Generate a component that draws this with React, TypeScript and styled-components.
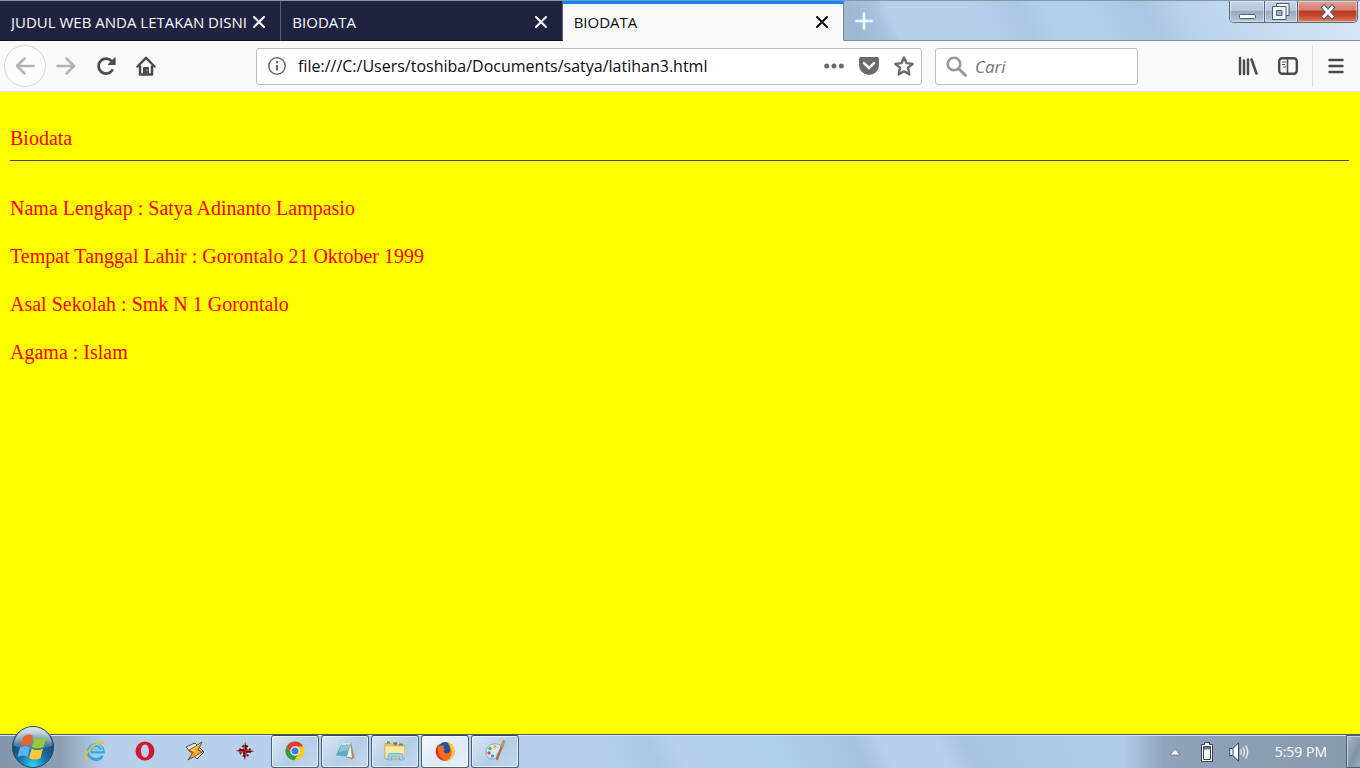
import React from 'react';
import styled, { createGlobalStyle, css } from 'styled-components';

const GlobalStyle = createGlobalStyle`
  * {
    box-sizing: border-box;
  }

  body {
    margin: 0;
    font-family: 'Open Sans', 'Noto Sans', sans-serif;
  }

  button,
  input {
    font-family: inherit;
  }

  svg {
    display: block;
    flex: none;
  }
`;

const Desktop = styled.div`
  display: flex;
  flex-direction: column;
  min-height: 100vh;
`;

const TitleBar = styled.header`
  display: flex;
  align-items: stretch;
  height: 41px;
  border-top: 1px solid #7f97a8;
  background: linear-gradient(
    65deg,
    #b7d1eb 71%,
    #adc8e2 75%,
    #b3cee9 77%,
    #b3cee9 80%,
    #abc6e0 84%,
    #b9d3ec 87%,
    #d3e4f4 98%
  );
`;

const TabList = styled.div`
  display: flex;
  flex: 0 1 844px;
  min-width: 0;
`;

const Tab = styled.div<{ $active?: boolean }>`
  display: flex;
  align-items: center;
  flex: 1 1 0;
  min-width: 0;
  padding: 2px 11px 0 11px;
  background: #202340;
  color: #f9f9fa;
  border-right: 1px solid #5b5d73;
  border-bottom: 1px solid #11132a;

  ${({ $active }) =>
    $active &&
    css`
      padding-top: 0;
      background: #f9f9f9;
      color: #0c0c0d;
      border-top: 3px solid #0a84ff;
      border-right-color: #7088a3;
      border-bottom-color: #f9f9f9;
    `}
`;

const TabTitle = styled.span`
  flex: 1;
  overflow: hidden;
  white-space: nowrap;
  font-size: 15px;
  line-height: 20px;
`;

const PlainButton = styled.button`
  display: flex;
  align-items: center;
  justify-content: center;
  padding: 0;
  border: 0;
  background: none;
  color: inherit;
`;

const CloseTab = styled(PlainButton)`
  flex: none;
  width: 20px;
  height: 20px;
`;

const StripFill = styled.div`
  display: flex;
  flex: 1;
  justify-content: space-between;
  padding-right: 2px;
  border-bottom: 1px solid #7890ab;
`;

const NewTab = styled(PlainButton)`
  width: 60px;
  padding-right: 20px;
  color: #f5f9fd;
  background: linear-gradient(65deg, #9db8d3 20%, #a7c2dd 55%, transparent 75%);
`;

const WindowControls = styled.div`
  display: flex;
  height: 22px;
  border: 1px solid #56687c;
  border-top: 0;
  border-radius: 0 0 5px 5px;
  overflow: hidden;
`;

const WindowButton = styled(PlainButton)<{ $width: number; $close?: boolean }>`
  width: ${({ $width }) => $width}px;
  border-right: 1px solid #56687c;
  box-shadow: inset 0 0 0 1px rgba(255, 255, 255, 0.45);
  background: linear-gradient(#c6d5e4 0%, #b7c8d9 45%, #98aabe 50%, #b5c9dd 100%);

  ${({ $close }) =>
    $close &&
    css`
      border-right: 0;
      background: linear-gradient(#e3a092 0%, #d6806c 42%, #bf3720 50%, #c1472c 70%, #dc8260 100%);
    `}
`;

const Toolbar = styled.nav`
  display: flex;
  align-items: center;
  height: 51px;
  padding: 0 4px;
  background: #f9f9f9;
  border-bottom: 1px solid #dedee4;
`;

const ToolButton = styled(PlainButton)<{ $disabled?: boolean }>`
  flex: none;
  width: 40px;
  height: 40px;
  color: ${({ $disabled }) => ($disabled ? '#b3b3b3' : '#4a4a4b')};
`;

const BackButton = styled(ToolButton)`
  width: 42px;
  height: 42px;
  border: 1px solid #d4d4d4;
  border-radius: 50%;
  background: #fcfcfc;
`;

const Spacer = styled.div`
  flex: 0 1 90px;
`;

const Field = styled.div`
  display: flex;
  align-items: center;
  height: 37px;
  background: #fff;
  border: 1px solid #bdbdbd;
  border-radius: 3px;
  color: #6a6a6b;
`;

const AddressField = styled(Field)`
  flex: 1;
  min-width: 0;
  padding: 0 0 0 10px;
  margin-right: 13px;
`;

const SearchField = styled(Field)`
  flex: 0 1 203px;
  min-width: 0;
  padding: 0 10px;
`;

const TextInput = styled.input`
  flex: 1;
  min-width: 0;
  height: 26px;
  padding: 0;
  margin-left: 11px;
  border: 0;
  outline: 0;
  background: transparent;
  color: #0c0c0d;
  font-size: 16px;
`;

const SearchInput = styled(TextInput)`
  margin-left: 8px;
  font-size: 17px;

  &::placeholder {
    color: #737373;
    font-style: italic;
    opacity: 1;
  }
`;

const FieldButton = styled(PlainButton)`
  flex: none;
  width: 35px;
  height: 35px;
`;

const Divider = styled.span`
  width: 1px;
  height: 42px;
  margin: 0 3px 0 4px;
  background: #dcdcdc;
`;

const Page = styled.main`
  flex: 1;
  padding: 34px 11px 34px 10px;
  background: #ffff00;
  color: #ff0000;
  font-family: 'Liberation Serif', 'Times New Roman', serif;
  font-size: 20px;
  line-height: 24px;
`;

const Rule = styled.hr`
  height: 1px;
  margin: 10px 0 35px;
  border: 0;
  background: #42424a;
`;

const Entry = styled.p`
  margin: 0 0 24px;
`;

const Taskbar = styled.footer`
  display: flex;
  align-items: stretch;
  height: 34px;
  border-top: 1px solid #46576b;
  box-shadow: inset 0 1px 0 #dbe7f2;
  background: linear-gradient(
      90deg,
      #8496ab 0,
      #8c9fb5 60px,
      rgba(183, 209, 236, 0) 105px,
      rgba(183, 209, 236, 0) calc(100% - 235px),
      #8ea3bb calc(100% - 195px),
      #8799ae 100%
    ),
    linear-gradient(
      65deg,
      #b7d1ec 43%,
      #abc8e3 48%,
      #b7d1ec 50%,
      #b0cfeb 57%,
      #a7c2de 63%,
      #b7d1ec 65%,
      #b7d1ec 69%,
      #a8c3df 71%,
      #b0cbe7 79%
    );
`;

const StartSlot = styled.div`
  position: relative;
  width: 70px;
`;

const StartButton = styled(PlainButton)`
  position: absolute;
  left: 11px;
  bottom: 0;
`;

const QuickLaunch = styled(PlainButton)`
  width: 50px;
  padding-bottom: 2px;
`;

const RunningApps = styled.div`
  display: flex;
  gap: 2px;
  padding-left: 1px;
`;

const AppButton = styled(PlainButton)<{ $focused?: boolean }>`
  width: 48px;
  padding-bottom: 2px;
  border: 1px solid #4c6078;
  border-top-color: #35475c;
  border-radius: 3px;
  box-shadow: inset 0 0 0 1px rgba(255, 255, 255, 0.6);
  background: ${({ $focused }) =>
    $focused
      ? 'linear-gradient(150deg, #f4f8fc, #dce9f6 60%, #e8f1f9)'
      : 'linear-gradient(135deg, #d9e6f3, #b3cde9 55%, #c3d8ee)'};
`;

const Tray = styled.div`
  display: flex;
  align-items: center;
  margin-left: auto;
  color: #fff;
`;

const TrayButton = styled(PlainButton)`
  width: 32px;
  height: 32px;
`;

const Clock = styled.time`
  padding: 0 19px 0 20px;
  font-size: 14px;
  line-height: 20px;
`;

const ShowDesktop = styled(PlainButton)`
  align-self: stretch;
  width: 14px;
  border: 1px solid #4d6074;
  border-right: 0;
  box-shadow: inset 1px 1px 0 #c3d0dd;
  background: linear-gradient(120deg, #a9b8c8, #8194aa 60%, #98a9bb);
`;

const CrossIcon = () => (
  <svg width="14" height="14" viewBox="0 0 14 14" fill="none" stroke="currentColor" strokeWidth="2" strokeLinecap="round">
    <path d="M2 2l10 10M12 2L2 12" />
  </svg>
);

const PlusIcon = () => (
  <svg width="18" height="18" viewBox="0 0 18 18" stroke="currentColor" strokeWidth="2.600" strokeLinecap="round">
    <path d="M9 1.5v15M1.5 9h15" />
  </svg>
);

const ArrowIcon = ({ forward }: { forward?: boolean }) => (
  <svg width="20" height="20" viewBox="0 0 20 20" fill="none" stroke="currentColor" strokeWidth="2.5" strokeLinecap="round" strokeLinejoin="round">
    {forward ? <path d="M1.5 10h16.500M10.500 2.500L18 10l-7.500 7.500" /> : <path d="M18.500 10H2M9.500 2.500L2 10l7.500 7.500" />}
  </svg>
);

const ReloadIcon = () => (
  <svg width="20" height="20" viewBox="0 0 20 20" fill="none" stroke="currentColor" strokeWidth="2.700" strokeLinecap="round">
    <path d="M16.300 14.300A7.500 7.500 0 1 1 16 5.500" />
    <path d="M19 2v6.500h-6.500z" fill="currentColor" strokeWidth="1.200" strokeLinejoin="round" />
  </svg>
);

const HomeIcon = () => (
  <svg width="20" height="20" viewBox="0 0 20 20" fill="none" stroke="currentColor" strokeLinecap="round" strokeLinejoin="round">
    <path d="M1.500 10.500L10 1.800l8.500 8.700" strokeWidth="2.500" />
    <path d="M4 10.500v8h12v-8" strokeWidth="2.500" />
    <path d="M7.500 17.500v-6h5v6z" fill="currentColor" strokeWidth="1" />
    <path d="M10.800 14h.4" stroke="#f9f9f9" strokeWidth="1.200" />
  </svg>
);

const InfoIcon = () => (
  <svg width="20" height="20" viewBox="0 0 20 20" fill="none" stroke="currentColor">
    <circle cx="10" cy="10" r="8.200" strokeWidth="1.500" />
    <path d="M10 9v5.500M10 5v2.200" strokeWidth="2.200" />
  </svg>
);

const DotsIcon = () => (
  <svg width="20" height="6" viewBox="0 0 20 6" fill="currentColor">
    <circle cx="2.700" cy="3" r="2.500" />
    <circle cx="10" cy="3" r="2.500" />
    <circle cx="17.300" cy="3" r="2.500" />
  </svg>
);

const PocketIcon = () => (
  <svg width="20" height="18" viewBox="0 0 20 18">
    <path d="M2 0h16q2 0 2 2v6a10 10 0 0 1-20 0V2q0-2 2-2z" fill="currentColor" />
    <path d="M5 6.200l5 4.800 5-4.800" fill="none" stroke="#fff" strokeWidth="2.500" strokeLinecap="round" strokeLinejoin="round" />
  </svg>
);

const StarIcon = () => (
  <svg width="20" height="20" viewBox="0 0 20 20" fill="none" stroke="currentColor" strokeWidth="2.300" strokeLinejoin="round">
    <path d="M10 1.500l2.500 5.700 6.200.6-4.700 4.100 1.400 6.600L10 15.200l-5.400 3.300L6 11.900 1.300 7.800l6.200-.6z" />
  </svg>
);

const SearchIcon = () => (
  <svg width="21" height="21" viewBox="0 0 21 21" fill="none" stroke="#969697" strokeLinecap="round">
    <circle cx="8" cy="8" r="6.300" strokeWidth="2.600" />
    <path d="M13 13l6.300 6.300" strokeWidth="3" />
  </svg>
);

const LibraryIcon = () => (
  <svg width="20" height="20" viewBox="0 0 20 20" fill="none" stroke="currentColor" strokeWidth="2.500" strokeLinecap="round">
    <path d="M2 2v16M6 4.500V18M10 3.500V18M13.500 3.500L18.500 17.500" />
  </svg>
);

const SidebarIcon = () => (
  <svg width="20" height="18" viewBox="0 0 20 18" fill="none" stroke="currentColor">
    <rect x="1.200" y="1.200" width="17.600" height="15.600" rx="3" strokeWidth="2.400" />
    <path d="M9.500 1v16" strokeWidth="1.600" />
    <path d="M4 5h4M4 7.500h3M5 10h3" strokeWidth="1.200" />
  </svg>
);

const MenuIcon = () => (
  <svg width="16" height="16" viewBox="0 0 16 16" stroke="currentColor" strokeWidth="2.400" strokeLinecap="round">
    <path d="M1.500 2h13M1.500 8h13M1.500 14h13" />
  </svg>
);

const MinimizeGlyph = () => (
  <svg width="18" height="20" viewBox="0 0 18 20">
    <rect x="1.500" y="12.500" width="16" height="4" rx="1" fill="#fff" stroke="#4f5c74" />
  </svg>
);

const RestoreGlyph = () => (
  <svg width="18" height="18" viewBox="0 0 18 18" stroke="#4f5c74" fill="#f4f6f8">
    <path d="M4.500.5h12.500v12H4.500z" />
    <path d="M.5 3.500h13.500v13H.5z" />
    <path d="M4.500 7.500h5.500v5H4.500z" fill="#9eb2c8" />
  </svg>
);

const CloseGlyph = () => (
  <svg width="18" height="16" viewBox="0 0 18 16" strokeLinecap="square">
    <path d="M5 3.500l8 9M13 3.500l-8 9" stroke="#535b72" strokeWidth="5" />
    <path d="M5 3.500l8 9M13 3.500l-8 9" stroke="#f7f7f7" strokeWidth="3" />
  </svg>
);

const StartOrb = () => (
  <svg width="44" height="42" viewBox="0 0 44 42">
    <defs>
      <radialGradient id="orb" cx="50%" cy="95%" r="85%">
        <stop offset="0" stopColor="#35d3f2" />
        <stop offset="0.4" stopColor="#1674a7" />
        <stop offset="0.75" stopColor="#174b79" />
        <stop offset="1" stopColor="#7893ae" />
      </radialGradient>
      <linearGradient id="shine" x1="0" y1="0" x2="0" y2="1">
        <stop offset="0" stopColor="#fff" stopOpacity="0.75" />
        <stop offset="1" stopColor="#fff" stopOpacity="0.15" />
      </linearGradient>
    </defs>
    <circle cx="22" cy="21" r="20.500" fill="url(#orb)" stroke="#1f4668" />
    <path d="M3 20a19 19 0 0 1 38 0q-19 6-38 0z" fill="url(#shine)" />
    <path d="M12.500 10.500q5-3.500 9.500-.5l-2.500 10q-4.500-3-10 0z" fill="#e8622c" />
    <path d="M23.500 11q5.500 3 12 0l-3 10q-6 3-11.500 0z" fill="#93c83d" />
    <path d="M9 21.500q5.500-3 10 0l-2.500 9.500q-4.500-3-10 0z" fill="#5db3ea" />
    <path d="M20.500 22.500q5.500 3 11.500 0l-2.500 9.500q-5.500 3-11.500 0z" fill="#fcc833" />
  </svg>
);

const ExplorerE = () => (
  <svg width="22" height="22" viewBox="0 0 22 22" fill="none">
    <path d="M18 15.500a7 7 0 1 1 .800-4H7" stroke="#38a5de" strokeWidth="3.800" />
    <path d="M17 15a6.500 6.500 0 1 1 1.500-4.500H7.500" stroke="#86d5f6" strokeWidth="1.400" />
    <path d="M3.500 19.500C-1 20 2 12.500 8 7.200S20.500.5 20 5" stroke="#f0bd2d" strokeWidth="1.800" strokeLinecap="round" />
  </svg>
);

const OperaO = () => (
  <svg width="20" height="20" viewBox="0 0 20 20">
    <path fillRule="evenodd" d="M10 .5a9.500 9.500 0 1 1 0 19 9.500 9.500 0 0 1 0-19zM10 3.500c-2.600 0-4 3-4 6.500s1.400 6.500 4 6.500 4-3 4-6.500-1.400-6.500-4-6.500z" fill="#d9152a" />
  </svg>
);

const WinampBolt = () => (
  <svg width="20" height="20" viewBox="0 0 20 20" strokeLinejoin="round">
    <path d="M1 6l9-4 9 9-7 7z" fill="#f5f5f5" stroke="#444" />
    <path d="M17 1L3.500 9.500l4.500 1.800-5 7.700 15-8.300-5-1.500z" fill="#f8a62a" stroke="#6d4311" strokeWidth="0.900" />
    <path d="M15 3.500L6.500 9l4.500 1" fill="none" stroke="#ffd97b" />
  </svg>
);

const CompassStar = () => (
  <svg width="20" height="20" viewBox="0 0 20 20">
    <circle cx="10" cy="10" r="5" fill="#dfe4ea" stroke="#24282d" strokeWidth="2" strokeDasharray="2 2" />
    <path d="M10 1l2 7 7 2-7 2-2 7-2-7-7-2 7-2z" fill="#ee2b2b" />
    <path d="M10 1v9l2-2zM19 10h-9l2 2zM10 19v-9l-2 2zM1 10h9L8 8z" fill="#42141a" />
  </svg>
);

const ChromeBall = () => (
  <svg width="20" height="20" viewBox="0 0 20 20">
    <circle cx="10" cy="10" r="9.500" fill="#fbc926" />
    <path d="M1.800 5.200A9.500 9.500 0 0 1 18.300 5.500H10L6.100 12.300z" fill="#dc4032" />
    <path d="M1.800 5.200A9.500 9.500 0 0 0 9 19.500l5-7.200-4 2.200-4-2.200z" fill="#2d9b4f" />
    <circle cx="10" cy="10" r="4.700" fill="#f6f6f6" />
    <circle cx="10" cy="10" r="3.600" fill="#3d7fea" />
  </svg>
);

const NotepadIcon = () => (
  <svg width="22" height="20" viewBox="0 0 22 20">
    <path d="M17 1l3.500 15.500-2.500 2L12 16z" fill="#a99052" />
    <path d="M16 1.500l2 15-6-1z" fill="#f1f3f2" />
    <path d="M8 2l9-.5-4 14-11.500-1z" fill="#62a9bd" />
    <path d="M8 2l9-.5-.7 2-9 .8z" fill="#d4e3e6" />
    <path d="M7 4.500l9-.5-2 5-9 2z" fill="#8cc6d4" />
  </svg>
);

const FolderIcon = () => (
  <svg width="22" height="20" viewBox="0 0 22 20">
    <path d="M1 2.500h6L8.500 4h12v14H1z" fill="#e7c565" stroke="#c8a044" strokeWidth="0.800" />
    <path d="M3 1.500h3M9 2.500h4M15 3.500h4" stroke="#4fa34b" strokeWidth="2" />
    <path d="M10 2.500h3" stroke="#d74a32" strokeWidth="2" />
    <path d="M1.500 5.500h19V17h-19z" fill="#fbe9a2" />
    <path d="M4 19v-4.500q0-2 2-2h11q2 0 2 2V19h-3.500v-3h-8v3z" fill="#98d4ee" stroke="#5eb2d8" strokeWidth="0.800" />
  </svg>
);

const FirefoxIcon = () => (
  <svg width="20" height="20" viewBox="0 0 20 20">
    <circle cx="10.500" cy="9" r="8" fill="#214fa8" />
    <path d="M12 1c4 1.500 7.500 5 7.500 9.500a9.500 9.500 0 1 1-18-4.300L3 3l1.500 2.500C6 4 8 4.500 9.500 5.500L8.200 7.500c2 .2 2 1.200.3 2.200 1 3.300 4.300 3.300 6 1.500C16 9 14.500 4 12 1z" fill="#f66d1e" />
    <path d="M12.500 1c4 1.500 7 5 7 9.500a9.500 9.500 0 0 1-8 9c4-2 6-6 5-10-.7-3.500-2-6-4-8.500z" fill="#ffce36" />
    <path d="M1.500 7a9.500 9.500 0 0 0 8 12.500C5 17 2.500 13 3 5z" fill="#dd243e" />
  </svg>
);

const PaintIcon = () => (
  <svg width="22" height="21" viewBox="0 0 22 21">
    <path d="M2 12C2 6 8 3 13 4s6 5 4 7-4 1-4 4-3 4.500-6 4-5-3-5-7z" fill="#d9e9f4" stroke="#7ca8c6" />
    <circle cx="6" cy="8.500" r="1.700" fill="#55b14b" />
    <circle cx="11" cy="6.700" r="1.700" fill="#e0b33b" />
    <circle cx="5" cy="13" r="1.700" fill="#de4a3c" />
    <circle cx="8.500" cy="16" r="1.600" fill="#3c85d3" />
    <path d="M19.500 2L13 19" stroke="#b26b37" strokeWidth="2.200" strokeLinecap="round" />
    <path d="M20 1.500l-2 4.500" stroke="#c98d50" strokeWidth="3" strokeLinecap="round" />
  </svg>
);

const TrayArrow = () => (
  <svg width="12" height="8" viewBox="0 0 12 8">
    <path d="M6 1l5 6H1z" fill="#fff" stroke="#5f7186" strokeWidth="0.800" />
  </svg>
);

const BatteryIcon = () => (
  <svg width="14" height="20" viewBox="0 0 14 20">
    <path d="M4.500.500h5v2h3v17h-11v-17h3z" fill="#fff" stroke="#36424e" />
    <path d="M3.500 4.500h7v13h-7z" fill="#fff" stroke="#36424e" />
    <path d="M4 5h6v2.500H4z" fill="#6b7b8d" />
  </svg>
);

const SpeakerIcon = () => (
  <svg width="20" height="20" viewBox="0 0 20 20" fill="none">
    <path d="M.800 6.500h3L9.500 1v18l-5.700-5.500h-3z" fill="#fff" stroke="#36424e" />
    <path d="M4 6.500v7" stroke="#36424e" />
    <path d="M11.500 7.500q1.500 2.500 0 5M14 5.500q3 4.500 0 9M16.500 3.500q4.500 6.500 0 13" stroke="#f4f6f8" strokeWidth="1.200" />
  </svg>
);

const tabs = [
  { title: 'JUDUL WEB ANDA LETAKAN DISNI' },
  { title: 'BIODATA' },
  { title: 'BIODATA', active: true },
];

const shortcuts = [
  { name: 'Internet Explorer', icon: <ExplorerE /> },
  { name: 'Opera', icon: <OperaO /> },
  { name: 'Winamp', icon: <WinampBolt /> },
  { name: 'Compass', icon: <CompassStar /> },
];

const runningApps = [
  { name: 'Chrome', icon: <ChromeBall /> },
  { name: 'Notepad', icon: <NotepadIcon /> },
  { name: 'Explorer', icon: <FolderIcon /> },
  { name: 'Firefox', icon: <FirefoxIcon />, focused: true },
  { name: 'Paint', icon: <PaintIcon /> },
];

const biodata = [
  'Nama Lengkap : Satya Adinanto Lampasio',
  'Tempat Tanggal Lahir : Gorontalo 21 Oktober 1999',
  'Asal Sekolah : Smk N 1 Gorontalo',
  'Agama : Islam',
];

const BrowserTabs = () => (
  <TitleBar>
    <TabList>
      {tabs.map((tab, i) => (
        <Tab key={i} $active={tab.active}>
          <TabTitle>{tab.title}</TabTitle>
          <CloseTab aria-label="Close tab"><CrossIcon /></CloseTab>
        </Tab>
      ))}
    </TabList>
    <StripFill>
      <NewTab aria-label="New tab"><PlusIcon /></NewTab>
      <WindowControls>
        <WindowButton $width={35} aria-label="Minimize"><MinimizeGlyph /></WindowButton>
        <WindowButton $width={33} aria-label="Restore"><RestoreGlyph /></WindowButton>
        <WindowButton $width={59} $close aria-label="Close"><CloseGlyph /></WindowButton>
      </WindowControls>
    </StripFill>
  </TitleBar>
);

const BrowserToolbar = () => (
  <Toolbar>
    <BackButton $disabled aria-label="Back"><ArrowIcon /></BackButton>
    <ToolButton $disabled aria-label="Forward"><ArrowIcon forward /></ToolButton>
    <ToolButton aria-label="Reload"><ReloadIcon /></ToolButton>
    <ToolButton aria-label="Home"><HomeIcon /></ToolButton>
    <Spacer />
    <AddressField>
      <InfoIcon />
      <TextInput aria-label="Address" defaultValue="file:///C:/Users/toshiba/Documents/satya/latihan3.html" />
      <FieldButton aria-label="Page actions"><DotsIcon /></FieldButton>
      <FieldButton aria-label="Save to Pocket"><PocketIcon /></FieldButton>
      <FieldButton aria-label="Bookmark"><StarIcon /></FieldButton>
    </AddressField>
    <SearchField>
      <SearchIcon />
      <SearchInput aria-label="Search" placeholder="Cari" />
    </SearchField>
    <Spacer />
    <ToolButton aria-label="Library"><LibraryIcon /></ToolButton>
    <ToolButton aria-label="Sidebars"><SidebarIcon /></ToolButton>
    <Divider />
    <ToolButton aria-label="Menu"><MenuIcon /></ToolButton>
  </Toolbar>
);

const App = () => {
  return (
    <Desktop>
      <GlobalStyle />
      <BrowserTabs />
      <BrowserToolbar />

      <Page>
        <div>Biodata</div>
        <Rule />
        {biodata.map((line) => (
          <Entry key={line}>{line}</Entry>
        ))}
      </Page>

      <Taskbar>
        <StartSlot>
          <StartButton aria-label="Start"><StartOrb /></StartButton>
        </StartSlot>
        {shortcuts.map(({ name, icon }) => (
          <QuickLaunch key={name} aria-label={name}>{icon}</QuickLaunch>
        ))}
        <RunningApps>
          {runningApps.map(({ name, icon, focused }) => (
            <AppButton key={name} $focused={focused} aria-label={name}>{icon}</AppButton>
          ))}
        </RunningApps>
        <Tray>
          <TrayButton aria-label="Show hidden icons"><TrayArrow /></TrayButton>
          <TrayButton aria-label="Battery"><BatteryIcon /></TrayButton>
          <TrayButton aria-label="Volume"><SpeakerIcon /></TrayButton>
          <Clock>5:59 PM</Clock>
          <ShowDesktop aria-label="Show desktop" />
        </Tray>
      </Taskbar>
    </Desktop>
  );
};

export default App;
